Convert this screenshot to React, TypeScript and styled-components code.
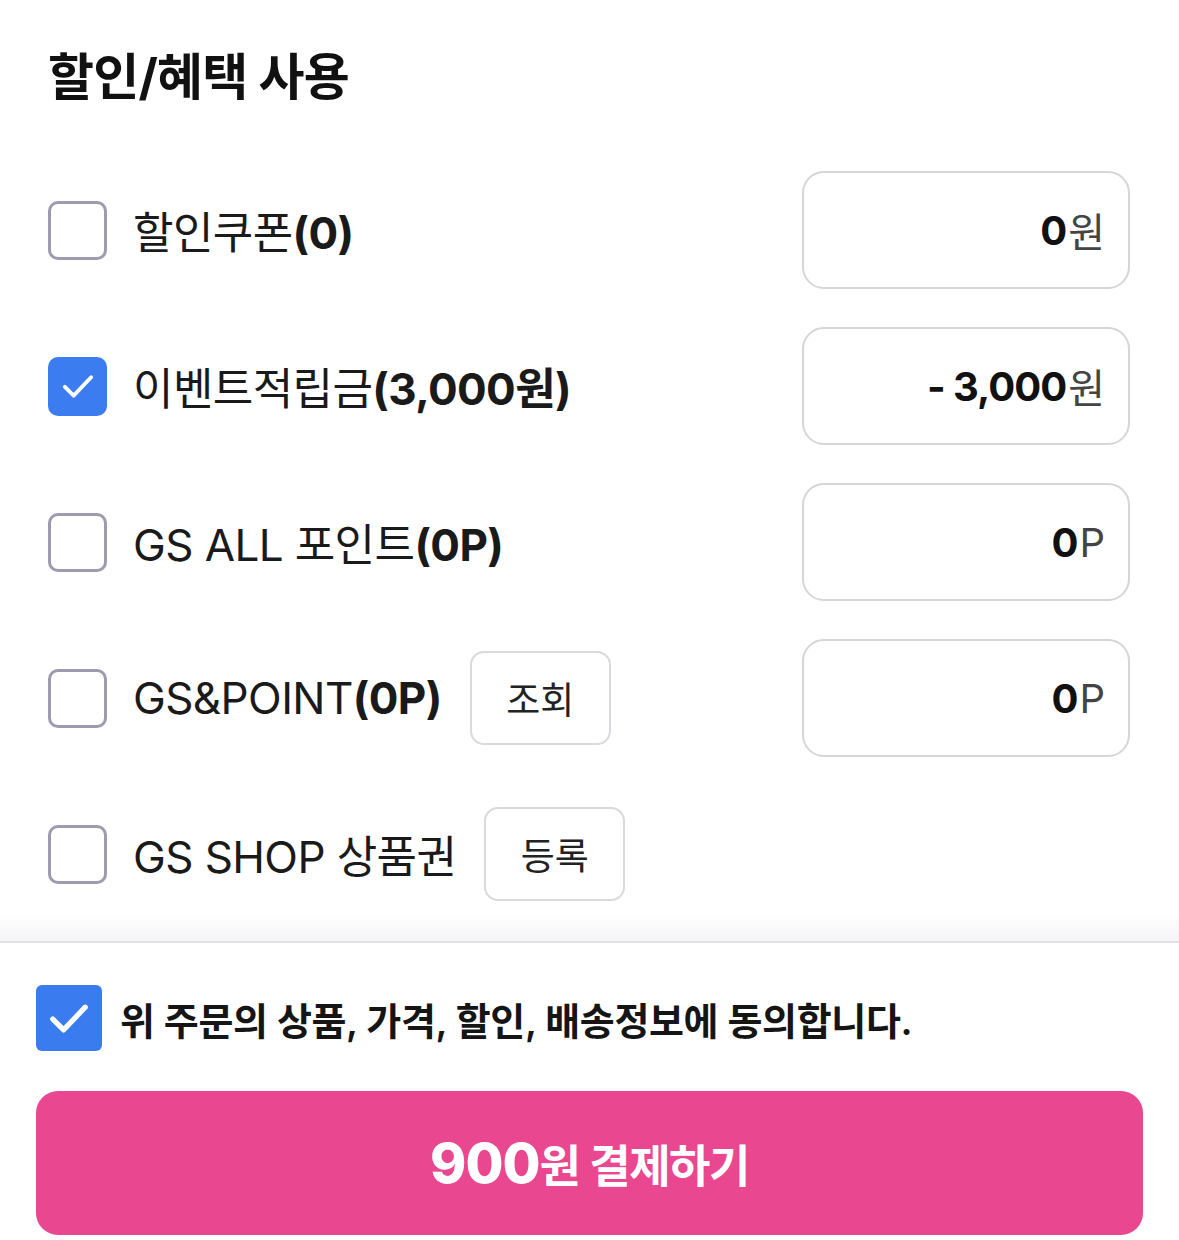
import React from 'react';
import styled, { createGlobalStyle } from 'styled-components';

const GlobalStyle = createGlobalStyle`
  html, body {
    margin: 0;
    padding: 0;
    background: #ffffff;
  }
  body {
    font-family: Inter, "Noto Sans CJK KR", "Noto Sans", sans-serif;
    color: #151515;
  }
`;

/**
 * Whole page.
 */
const Page = styled.div`
  width: 1179px;
  height: 1240px;
  display: flex;
  flex-direction: column;
  overflow: hidden;
`;

const Section = styled.section`
  padding: 48px 49px 0 48px;
`;

const Title = styled.h2`
  margin: 0 0 65px;
  font-size: 50px;
  line-height: 58px;
  font-weight: 700;
  letter-spacing: -0.8px;
  color: #111;
`;

const List = styled.div`
  display: flex;
  flex-direction: column;
  gap: 38px;
`;

const Row = styled.div`
  height: 118px;
  display: flex;
  align-items: center;
`;

const Left = styled.div`
  flex: 1;
  display: flex;
  align-items: center;
`;

interface BoxProps {
  checked?: boolean;
}

const CheckBox = styled.span<BoxProps>`
  box-sizing: border-box;
  width: 59px;
  height: 59px;
  flex: none;
  border-radius: 10px;
  border: ${p => (p.checked ? 'none' : '3.5px solid #9c9bb0')};
  background: ${p => (p.checked ? '#3b7cf1' : '#fff')};
  display: flex;
  align-items: center;
  justify-content: center;
`;

const Label = styled.span`
  margin-left: 26px;
  font-size: 44px;
  letter-spacing: -0.6px;
  color: #1a1a1a;
  white-space: nowrap;

  b {
    font-weight: 700;
  }
`;

const SmallButton = styled.button`
  box-sizing: border-box;
  margin-left: 28px;
  width: 141px;
  height: 94px;
  border: 2px solid #d9d9de;
  border-radius: 14px;
  background: #fff;
  font-family: inherit;
  font-size: 37px;
  color: #222;
  padding: 0;
`;

const ValueBox = styled.div`
  box-sizing: border-box;
  width: 328px;
  height: 118px;
  border: 2.5px solid #d5d5da;
  border-radius: 22px;
  display: flex;
  align-items: center;
  justify-content: flex-end;
  padding-right: 23px;
  font-size: 40px;
  white-space: nowrap;
`;

const Amount = styled.b`
  font-weight: 700;
  color: #111;
  letter-spacing: -1px;
`;

const Unit = styled.span`
  font-weight: 400;
  color: #444;
  margin-left: 2px;
`;

const Divider = styled.div`
  height: 28px;
  flex: none;
  background: linear-gradient(to bottom, rgba(244, 244, 247, 0) 0%, #f5f5f8 100%);
  border-bottom: 2px solid #e1e1e4;
`;

const Footer = styled.div`
  padding: 42px 36px 0;
  display: flex;
  flex-direction: column;
`;

const Agree = styled.div`
  display: flex;
  align-items: center;
  height: 66px;
`;

const BigCheck = styled.span`
  width: 66px;
  height: 66px;
  flex: none;
  border-radius: 6px;
  background: #3a7cf0;
  display: flex;
  align-items: center;
  justify-content: center;
`;

const AgreeText = styled.span`
  margin-left: 18px;
  font-size: 38px;
  font-weight: 600;
  letter-spacing: -0.35px;
  color: #151515;
  white-space: nowrap;
`;

const PayButton = styled.button`
  margin-top: 40px;
  height: 144px;
  width: 100%;
  border: none;
  border-radius: 22px;
  background: #e9478f;
  color: #fff;
  font-family: inherit;
  display: flex;
  align-items: center;
  justify-content: center;
  padding: 0;
`;

const PayAmount = styled.span`
  font-size: 55px;
  font-weight: 800;
  letter-spacing: -1px;
`;

const PayText = styled.span`
  font-size: 45px;
  font-weight: 600;
  letter-spacing: -1.5px;
`;

const Check: React.FC<{ size: number; stroke: number }> = ({ size, stroke }) => (
  <svg width={size} height={size} viewBox="0 0 24 24" fill="none">
    <path
      d="M4.5 12.5l5 5L19.5 7"
      stroke="#fff"
      strokeWidth={stroke}
      strokeLinecap="round"
      strokeLinejoin="round"
    />
  </svg>
);

interface Item {
  text: string;
  bold?: string;
  checked?: boolean;
  button?: string;
  amount?: string;
  unit?: string;
}

const items: Item[] = [
  { text: '할인쿠폰', bold: '(0)', amount: '0', unit: '원' },
  { text: '이벤트적립금', bold: '(3,000원)', checked: true, amount: '- 3,000', unit: '원' },
  { text: 'GS ALL 포인트', bold: '(0P)', amount: '0', unit: 'P' },
  { text: 'GS&POINT', bold: '(0P)', button: '조회', amount: '0', unit: 'P' },
  { text: 'GS SHOP 상품권', button: '등록' },
];

const App: React.FC = () => {
  return (
    <Page>
      <GlobalStyle />
      <Section>
        <Title>할인/혜택 사용</Title>
        <List>
          {items.map(item => (
            <Row key={item.text}>
              <Left>
                <CheckBox checked={item.checked}>
                  {item.checked && <Check size={42} stroke={2.2} />}
                </CheckBox>
                <Label>
                  {item.text}
                  {item.bold && <b>{item.bold}</b>}
                </Label>
                {item.button && <SmallButton>{item.button}</SmallButton>}
              </Left>
              {item.amount !== undefined && (
                <ValueBox>
                  <Amount>{item.amount}</Amount>
                  <Unit>{item.unit}</Unit>
                </ValueBox>
              )}
            </Row>
          ))}
        </List>
      </Section>
      <Divider />
      <Footer>
        <Agree>
          <BigCheck>
            <Check size={52} stroke={2.4} />
          </BigCheck>
          <AgreeText>위 주문의 상품, 가격, 할인, 배송정보에 동의합니다.</AgreeText>
        </Agree>
        <PayButton>
          <PayAmount>900</PayAmount>
          <PayText>원 결제하기</PayText>
        </PayButton>
      </Footer>
    </Page>
  );
};

export default App;
